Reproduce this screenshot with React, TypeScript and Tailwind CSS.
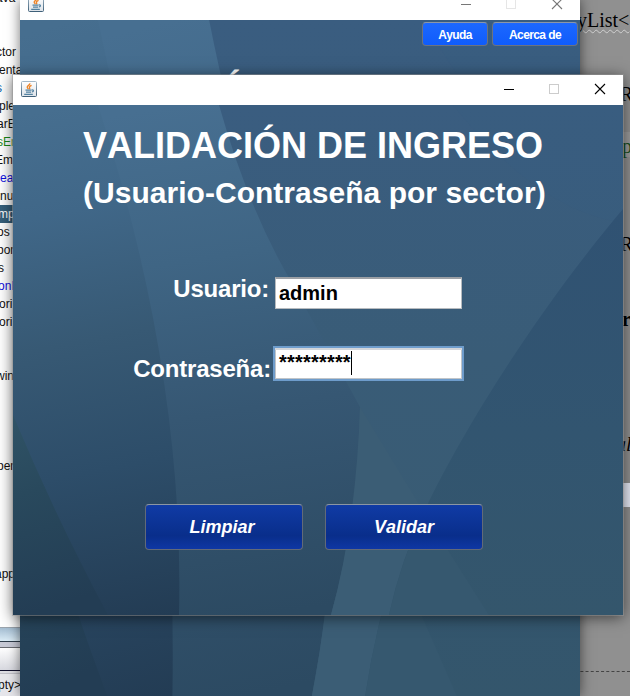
import React from "react";

type LineItem = { text: string; x: number; tone?: string; selected?: boolean };

const editorLines: LineItem[] = [
  { text: "ava", x: -4 },
  { text: "", x: 0 },
  { text: "", x: 0 },
  { text: "ctor", x: -4 },
  { text: "enta", x: -1 },
  { text: "s", x: -4, tone: "text-[#0060a8]" },
  { text: "ple", x: -1 },
  { text: "arE", x: -3 },
  { text: "sEm", x: -3, tone: "text-[#1a8a1a]" },
  { text: "Em", x: -5 },
  { text: "ea", x: 0, tone: "text-[#1010e0]" },
  { text: "nu", x: 0 },
  { text: "mp", x: -2, selected: true },
  { text: "os", x: -3 },
  { text: "por", x: -3 },
  { text: "s", x: -2 },
  { text: "onI", x: -2, tone: "text-[#1010e0]" },
  { text: "ori", x: -1 },
  { text: "ori", x: -1 },
  { text: "", x: 0 },
  { text: "", x: 0 },
  { text: "win", x: -4 },
  { text: "", x: 0 },
  { text: "", x: 0 },
  { text: "", x: 0 },
  { text: "", x: 0 },
  { text: "per", x: -3 },
  { text: "", x: 0 },
  { text: "", x: 0 },
  { text: "", x: 0 },
  { text: "", x: 0 },
  { text: "", x: 0 },
  { text: "app", x: -5 },
];

function JavaIcon() {
  return (
    <svg className="block size-4 shrink-0" viewBox="0 0 16 16">
      <defs>
        <linearGradient id="cupTile" x1="0" y1="0" x2="0" y2="1">
          <stop offset="0" stopColor="#ffffff" />
          <stop offset="1" stopColor="#dde3e9" />
        </linearGradient>
        <linearGradient id="cupEdge" x1="0" y1="0" x2="0" y2="1">
          <stop offset="0" stopColor="#a3b8c8" />
          <stop offset="1" stopColor="#3f6079" />
        </linearGradient>
      </defs>
      <rect x="0.5" y="0.5" width="15" height="15" rx="1" fill="url(#cupTile)" stroke="url(#cupEdge)" />
      <path d="M8.8 2.3C9.4 4 6 4.6 6.2 6.2c.1.8.9 1.2 1.2 2M10.6 4.4C9 5 7.9 5.8 8.6 6.8c.4.6.2 1-.3 1.5" fill="none" stroke="#ee8427" strokeWidth="1.3" />
      <path d="M4.5 9.2h6M5 11.1h5.2M3.2 13.3h8.6M10.8 9c2.3-.6 2 1.6.2 2" fill="none" stroke="#5382a1" strokeWidth="1.2" />
    </svg>
  );
}

function Backdrop({ id }: { id: string }) {
  return (
    <svg className="absolute inset-0 size-full" viewBox="0 0 610 510" preserveAspectRatio="none">
      <defs>
        <linearGradient id={id + "a"} gradientUnits="userSpaceOnUse" x1="60" y1="0" x2="160" y2="510">
          <stop offset="0" stopColor="#466e8f" />
          <stop offset="0.2" stopColor="#406788" />
          <stop offset="0.45" stopColor="#375974" />
          <stop offset="0.7" stopColor="#2d4d69" />
          <stop offset="1" stopColor="#233c54" />
        </linearGradient>
        <linearGradient id={id + "b"} gradientUnits="userSpaceOnUse" x1="170" y1="0" x2="250" y2="510">
          <stop offset="0" stopColor="#476f91" />
          <stop offset="0.3" stopColor="#3f6584" />
          <stop offset="0.6" stopColor="#365773" />
          <stop offset="1" stopColor="#2c4a62" />
        </linearGradient>
        <linearGradient id={id + "c"} x1="0" y1="0" x2="0.15" y2="1">
          <stop offset="0" stopColor="#305366" />
          <stop offset="0.4" stopColor="#29495d" />
          <stop offset="1" stopColor="#233d54" />
        </linearGradient>
        <linearGradient id={id + "d"} gradientUnits="userSpaceOnUse" x1="0" y1="0" x2="0" y2="510">
          <stop offset="0" stopColor="#3a5d80" />
          <stop offset="0.5" stopColor="#395c77" />
          <stop offset="1" stopColor="#395b72" />
        </linearGradient>
        <linearGradient id={id + "e"} x1="0" y1="0" x2="0" y2="1">
          <stop offset="0" stopColor="#305273" />
          <stop offset="0.55" stopColor="#325570" />
          <stop offset="1" stopColor="#34566c" />
        </linearGradient>
      </defs>
      <rect width="610" height="510" fill={`url(#${id}d)`} />
      <path d="M440 0H610V104L600 116Q520 100 440 0Z" fill="#395e82" opacity=".3" />
      <path d="M0 0H206Q236 106 279 178L347 302Q346 410 318 510H0Z" fill={`url(#${id}b)`} />
      <path d="M0 0H85Q172 270 166 510H0Z" fill={`url(#${id}a)`} />
      <path d="M0 310Q44 415 95 510H0Z" fill={`url(#${id}c)`} />
      <path d="M347 302L411 407Q388 458 376 510H318Q343 420 347 302Z" fill="#3b5d75" />
      <path d="M610 104C522 208 446 332 411 407Q388 455 376 510H610Z" fill={`url(#${id}e)`} />
      <path d="M411 407L476 510H376Q388 455 411 407Z" fill="#36586f" />
    </svg>
  );
}

function Controls({ faded }: { faded?: boolean }) {
  return (
    <svg className={faded ? "block h-3 w-[104px] text-[#777]" : "block h-3 w-[104px] text-black"} viewBox="0 0 104 12" fill="none" stroke="currentColor">
      <path d="M1 6.5h10" />
      <rect x="46.5" y="1.5" width="9" height="9" stroke={faded ? "#e6e6e6" : "#cccccc"} />
      <path d="M92 1l10 10M102 1l-10 10" strokeWidth="1.1" />
    </svg>
  );
}

function SmallButton({ label, width }: { label: string; width: string }) {
  return (
    <button className={`${width} flex h-6 items-center justify-center rounded-[4px] border border-[#6b7380] border-t-[#8b97a8] bg-linear-to-b from-[#1c68ff] to-[#0f5cfb] pt-0.5 text-[12px] font-bold tracking-[-0.6px] text-white`}>
      {label}
    </button>
  );
}

function ActionButton({ label, pad }: { label: string; pad: string }) {
  return (
    <button className={`${pad} h-[46px] w-[158px] rounded-[4px] border border-[#626a78] border-t-[#8c96a3] bg-linear-to-b from-[#103ba5] via-[#092e8b] via-70% to-[#0e37a4] text-[18px] leading-none font-bold text-white italic`}>
      {label}
    </button>
  );
}

function LeftEditor() {
  return (
    <div className="flex w-5 shrink-0 flex-col overflow-hidden bg-white text-[12px] text-[#111]">
      <div className="-mt-[11px] h-[638px] shrink-0">
        {editorLines.map((line, i) => (
          <div key={i} className={`h-[18px] whitespace-nowrap leading-[18px] ${line.selected ? "bg-[#36607b] text-white" : ""} ${line.tone ?? ""}`}>
            <span className="block" style={{ marginLeft: line.x }}>{line.text}</span>
          </div>
        ))}
      </div>
      <div className="h-[15px] shrink-0 border-t border-[#9ba5ae] border-b border-b-[#2e3c4a] bg-linear-to-b from-[#a5bed2] to-[#dbecf6]" />
      <div className="h-[5px] shrink-0 bg-[#c7c9d5]" />
      <div className="h-6 shrink-0 border-t border-b border-t-[#686a70] border-b-[#10102c] bg-linear-to-b from-white to-[#d7d8df]" />
      <div className="h-[3px] shrink-0 border-b border-[#c0c0c8] bg-[#dddde3]" />
      <div className="grow bg-[#e6e6eb] pt-px leading-[20px]">
        <span className="-ml-0.5 block whitespace-nowrap">pty&gt;</span>
      </div>
    </div>
  );
}

function RightEditor() {
  return (
    <div className="relative w-[60px] shrink-0 overflow-hidden bg-[#909090] font-['Liberation_Serif',serif] text-[20px] leading-[26px] text-black">
      <div className="flex h-full flex-col">
        <div className="h-[132px] shrink-0 pt-[7px]">
          <span className="block pl-[7px] whitespace-nowrap underline decoration-[#d0d0d0] decoration-wavy decoration-1 underline-offset-2">yList&lt;</span>
          <span className="mt-[48px] block pl-[50px]">R</span>
        </div>
        <div className="h-[25px] shrink-0 bg-[#9b9b9b] pl-[52px] leading-[28px] text-[#194f21]">p</div>
        <div className="h-[326px] shrink-0">
          <span className="mt-[74px] block pl-[50px]">R</span>
          <span className="mt-[49px] block pl-[52px] font-bold">r</span>
          <span className="mt-[99px] block pl-[46px] italic">al</span>
        </div>
        <div className="h-6 shrink-0 bg-[#e6e9f5]" />
        <div className="h-[165px] shrink-0 border-b border-dashed border-[#444]" />
      </div>
    </div>
  );
}

export default function App() {
  return (
    <div className="relative flex h-[696px] w-[630px] overflow-hidden bg-[#909090] font-['Liberation_Sans',Arial,sans-serif] [font-kerning:none]">
      <LeftEditor />
      <div className="w-[550px] shrink-0" />
      <RightEditor />

      <section className="absolute top-0 left-5 flex h-[696px] w-[560px] flex-col shadow-[0_0_12px_rgba(0,0,0,0.55)]">
        <header className="flex h-5 shrink-0 justify-between bg-white pr-4 pl-2">
          <div className="-mt-1"><JavaIcon /></div>
          <div className="-mt-0.5"><Controls faded /></div>
        </header>
        <div className="relative grow overflow-hidden">
          <Backdrop id="main" />
          <div className="relative flex justify-end gap-1 pt-0.5 pr-0.5">
            <SmallButton label="Ayuda" width="w-[66px]" />
            <SmallButton label="Acerca de" width="w-[86px]" />
          </div>
          <div className="relative mt-[25px] pl-[199px] text-[36px] leading-[40px] font-bold text-white">Ó</div>
        </div>
      </section>

      <section className="absolute top-[75px] left-[13px] flex h-[540px] w-[610px] flex-col shadow-[0_0_0_1px_rgba(150,150,150,0.5),0_2px_14px_rgba(0,0,0,0.6)]">
        <header className="flex h-[30px] shrink-0 justify-between bg-white pr-4 pl-2">
          <div className="pt-1.5"><JavaIcon /></div>
          <div className="pt-2"><Controls /></div>
        </header>
        <div className="relative h-[510px] overflow-hidden text-white">
          <Backdrop id="login" />
          <div className="relative pt-[21px] pl-[70px] font-bold whitespace-nowrap">
            <h1 className="text-[36px] leading-[40px]">VALIDACIÓN DE INGRESO</h1>
            <h2 className="mt-[10px] text-[30px] leading-[34px] tracking-[0.03px]">(Usuario-Contraseña por sector)</h2>
          </div>
          <form className="relative mt-[67px] font-bold">
            <div className="flex h-[33px]">
              <label className="w-[256px] text-right text-[24px] leading-[24px] tracking-[-0.2px]">Usuario:</label>
              <div className="ml-[6px] flex h-8 w-[187px] items-center border border-[#b7bbbf] border-t-2 border-t-[#9ca0a5] bg-white pb-0.5 pl-[3px] text-[20px] text-black">admin</div>
            </div>
            <div className="mt-9 flex">
              <label className="w-[258px] pt-2 text-right text-[24px] leading-[30px] tracking-[-0.2px]">Contraseña:</label>
              <div className="ml-0.5 flex h-[35px] w-[191px] border-2 border-[#6e9ccb] bg-white pt-[3px] pl-1 text-[20px] leading-6 text-black shadow-[inset_0_2px_0_#d4d6da,inset_0_0_0_1px_#c0c4c8]">
                <span className="leading-[22px] tracking-[0.2px]">*********</span>
                <span className="h-6 w-px bg-black" />
              </div>
            </div>
          </form>
          <div className="relative mt-[120px] flex gap-[22px] pl-[132px]">
            <ActionButton label="Limpiar" pad="pr-1" />
            <ActionButton label="Validar" pad="pl-0" />
          </div>
        </div>
      </section>
    </div>
  );
}
